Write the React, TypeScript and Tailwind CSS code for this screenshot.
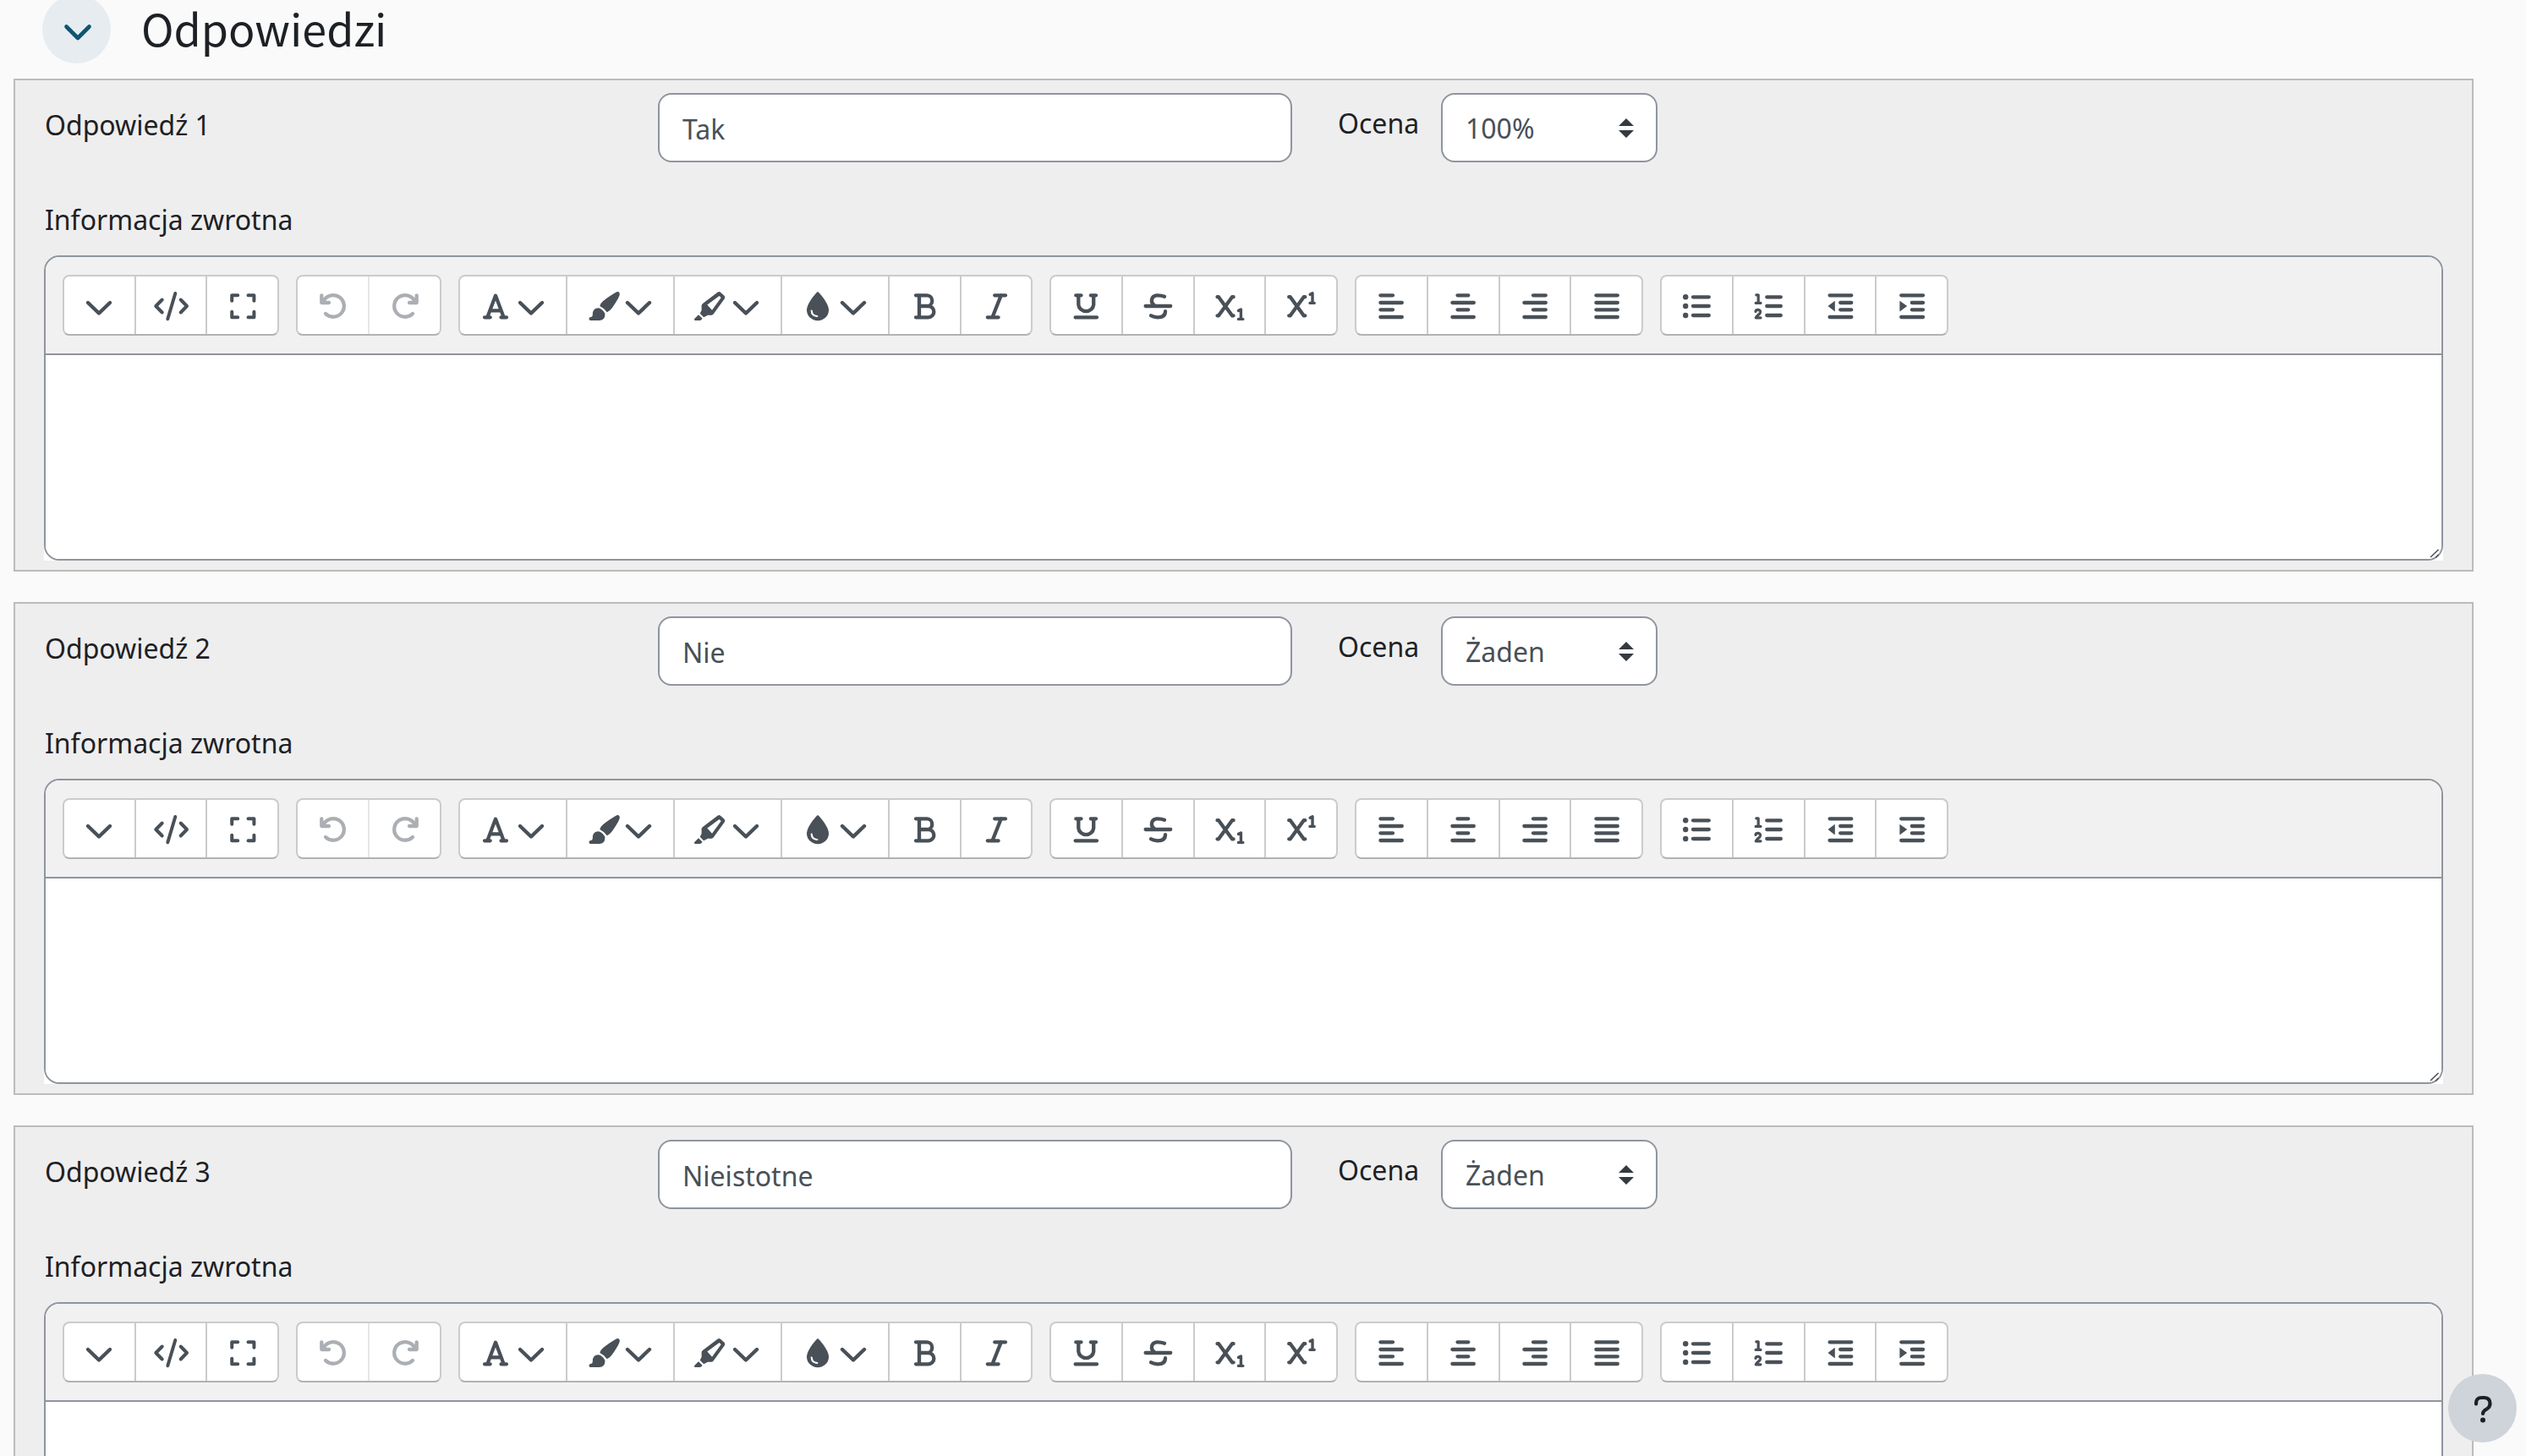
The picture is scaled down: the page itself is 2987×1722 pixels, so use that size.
import { useState } from 'react'
import type { ReactNode } from 'react'

const LINE = {
  fill: 'none',
  stroke: 'currentColor',
  strokeWidth: 4.3,
  strokeLinecap: 'round' as const,
  strokeLinejoin: 'round' as const,
}

function Icon({ children }: { children: ReactNode }) {
  return (
    <svg viewBox="0 0 42 42" className="h-[42px] w-[42px] shrink-0 overflow-visible" aria-hidden="true">
      {children}
    </svg>
  )
}

function Stroke({ d, width = 4.3 }: { d: string; width?: number }) {
  return (
    <Icon>
      <path d={d} {...LINE} strokeWidth={width} />
    </Icon>
  )
}

const chevron = <Stroke d="M8 18L21 30.5L34 18" width={4.4} />

type Tool = { name: string; icon: ReactNode; menu?: boolean; disabled?: boolean }

const toolGroups: { width: string; tools: Tool[] }[] = [
  {
    width: 'w-[256px]',
    tools: [
      { name: 'Pokaż więcej', icon: chevron },
      { name: 'Kod źródłowy', icon: <Stroke d="M10.7 14.5L3.3 22L10.7 29.5M26.3 7L17.3 37.3M32.7 14.5L40 22L32.7 29.5" width={4} /> },
      {
        name: 'Pełny ekran',
        icon: <Stroke d="M8.2 15.7V9.2H15.2M27.5 9.2H34.4V15.7M34.4 28.8V35.3H27.5M15.2 35.3H8.2V28.8" width={4} />,
      },
    ],
  },
  {
    width: 'w-[172px]',
    tools: [
      {
        name: 'Cofnij',
        disabled: true,
        icon: <Stroke d="M7.3 9.3V18H16M9.3 16.8A12.8 12.8 0 1 1 12 31" />,
      },
      {
        name: 'Ponów',
        disabled: true,
        icon: <Stroke d="M34.7 9.3V18H26M32.7 16.8A12.8 12.8 0 1 0 30 31" />,
      },
    ],
  },
  {
    width: 'w-[679px]',
    tools: [
      {
        name: 'Czcionka',
        menu: true,
        icon: <Stroke d="M8 35.3H14.7M27.5 35.3H34M11.8 34L21 9.6L30.2 34M15.5 27.3H26.5" width={4.2} />,
      },
      {
        name: 'Styl',
        menu: true,
        icon: (
          <Icon>
            <path
              fill="currentColor"
              d="M36.3 5.8C38.8 3.8 41.8 6 40.5 9.5C39 13.5 35 20 31.5 24.5Q29.5 27.5 25.8 29.3Q22.5 24.5 17.3 22Q18 18.5 21 16.2C26 12.2 31.5 8.5 36.3 5.8ZM16 24.2Q21 26 23.5 31Q23.5 39 16.5 39H6.3C4 39 4 35.2 6.3 35Q8.8 34.8 8.8 32Q8.7 24 16 24.2Z"
            />
          </Icon>
        ),
      },
      {
        name: 'Kolor tła',
        menu: true,
        icon: (
          <Icon>
            <path
              fill="currentColor"
              fillRule="evenodd"
              d="M29.8 5.5Q31.5 4.5 33 5.8L37.5 9.8Q39 11.3 37.8 13.3L24.8 31.3Q24 32.7 22.5 32.7H18L13.2 35.2L8.7 30.8L10.6 27V21.5Q10.6 20 12 19ZM31.5 10L17.3 20.6L23 26.8L33.7 12ZM7 32.3L11.6 36.7L10.3 38.2Q9.6 39 8.5 39H3.2Q1.2 38.6 2.2 36.9Z"
            />
          </Icon>
        ),
      },
      {
        name: 'Kolor tekstu',
        menu: true,
        icon: (
          <Icon>
            <path fill="currentColor" d="M21 5C22.5 5.6 34 18.5 34 26.8A13 12.4 0 0 1 8 26.8C8 18.5 19.5 5.6 21 5Z" />
            <path fill="none" stroke="white" strokeWidth={2.2} strokeLinecap="round" d="M13.7 27.5Q14 33.5 20.3 34" />
          </Icon>
        ),
      },
      {
        name: 'Pogrubienie',
        icon: <Stroke d="M11 9.3H24.2A6 6.3 0 0 1 24.2 22H16M24.2 22H25.8A6.5 6.6 0 0 1 25.8 35.3H11M15 9.3V35.3" />,
      },
      { name: 'Kursywa', icon: <Stroke d="M19.2 9.3H32M10.8 35.3H23.6M26.8 9.3L16.5 35.3" /> },
    ],
  },
  {
    width: 'w-[341px]',
    tools: [
      {
        name: 'Podkreślenie',
        icon: <Stroke d="M9.3 9.3H15.5M26.8 9.3H33M12.3 9.3V20.5A9 8.6 0 0 0 30.2 20.5V9.3M8.6 35.3H34" />,
      },
      {
        name: 'Przekreślenie',
        icon: (
          <Stroke d="M6.6 22H36.2M29 10.8Q24.5 9 19.5 9.4C13.5 10 11.5 17.5 17.5 21.5M30 28.2C30 33.5 25.5 35.3 20.5 35.3Q15.5 35 13 33.3" />
        ),
      },
      {
        name: 'Indeks dolny',
        icon: (
          <Icon>
            <path {...LINE} d="M6.5 11.2H8L24 33.3H25.6M25.6 11.2H24L8 33.3H6.5" />
            <path {...LINE} strokeWidth={3.4} d="M31.5 27.4L34.4 26V37.2M31.4 37.4H36.8" />
          </Icon>
        ),
      },
      {
        name: 'Indeks górny',
        icon: (
          <Icon>
            <path {...LINE} d="M6.2 11.2H7.7L23.7 33.3H25.3M25.3 11.2H23.7L7.7 33.3H6.2" />
            <path {...LINE} strokeWidth={3.4} d="M31.1 8.2L34 6.8V18M31 18.4H36.2" />
          </Icon>
        ),
      },
    ],
  },
  {
    width: 'w-[341px]',
    tools: [
      { name: 'Wyrównaj do lewej', icon: <Stroke d="M8.4 9.3H23M8.4 18H33.8M8.4 26.3H23M8.4 35H33.8" /> },
      { name: 'Wyśrodkuj', icon: <Stroke d="M14.5 9.3H27.3M8.4 18H33.8M14.5 26.3H27.3M8.4 35H33.8" /> },
      { name: 'Wyrównaj do prawej', icon: <Stroke d="M19 9.3H33.8M8.4 18H33.8M19 26.3H33.8M8.4 35H33.8" /> },
      { name: 'Wyjustuj', icon: <Stroke d="M8.4 9.3H33.8M8.4 18H33.8M8.4 26.3H33.8M8.4 35H33.8" /> },
    ],
  },
  {
    width: 'w-[341px]',
    tools: [
      {
        name: 'Lista wypunktowana',
        icon: (
          <Icon>
            <g fill="currentColor">
              <circle cx="8.2" cy="11.3" r="3.2" />
              <circle cx="8.2" cy="22" r="3.2" />
              <circle cx="8.2" cy="33" r="3.2" />
            </g>
            <path {...LINE} d="M17 11.3H35.8M17 22H35.8M17 33H35.8" />
          </Icon>
        ),
      },
      {
        name: 'Lista numerowana',
        icon: (
          <Icon>
            <path {...LINE} d="M19.3 11.3H35.8M19.3 22H35.8M19.3 33H35.8" />
            <path {...LINE} strokeWidth={3.2} d="M6.8 8.8H9.2V18.2M6.2 18.4H12M6 28.5C6.5 25.5 12 25.8 11.6 29.2C11.2 32 7.5 32.8 6.3 35.8H12" />
          </Icon>
        ),
      },
      {
        name: 'Zmniejsz wcięcie',
        icon: (
          <Icon>
            <path fill="currentColor" d="M6.5 22L14.8 15.7V28.6Z" />
            <path {...LINE} d="M8.6 9.3H34.3M21.2 18H34.3M21.2 26.3H34.3M8.6 35H34.3" />
          </Icon>
        ),
      },
      {
        name: 'Zwiększ wcięcie',
        icon: (
          <Icon>
            <path fill="currentColor" d="M15.2 22L6.4 15.7V28.6Z" />
            <path {...LINE} d="M8.2 9.3H34M20.8 18H34M20.8 26.3H34M8.2 35H34" />
          </Icon>
        ),
      },
    ],
  },
]

function Toolbar() {
  return (
    <div role="toolbar" className="flex flex-wrap gap-5 rounded-t-2xl border-b-2 border-[#8f959e] bg-[#f1f1f1] px-5 py-[21px]">
      {toolGroups.map((group, i) => (
        <div
          key={i}
          className={`flex h-[72px] overflow-hidden rounded-lg border-2 border-[#cbcbcb] border-b-[#b2b2b2] bg-white ${group.width}`}
        >
          {group.tools.map((tool) => (
            <button
              key={tool.name}
              type="button"
              aria-label={tool.name}
              disabled={tool.disabled}
              className={`flex items-center justify-center border-r-2 border-[#cbcbcb] text-[#495057] last:border-r-0 disabled:border-[#e6e6e6] disabled:text-[#abafb3] ${
                tool.menu ? 'w-[127px] shrink-0' : 'flex-1'
              }`}
            >
              {tool.icon}
              {tool.menu && chevron}
            </button>
          ))}
        </div>
      ))}
    </div>
  )
}

function FeedbackEditor({ id }: { id: string }) {
  return (
    <div className="relative rounded-t-[18px] bg-white">
      <div className="rounded-[18px] border-2 border-[#8f959e]">
        <Toolbar />
        <textarea id={id} className="block h-[241px] w-full resize-none rounded-b-2xl bg-white px-5 py-4 outline-none" />
      </div>
      <svg viewBox="0 0 14 14" className="absolute right-0.5 bottom-0.5 h-[14px] w-[14px]" aria-hidden="true">
        <path d="M1 12L10.5 3M7 12.5L10.5 9" fill="none" stroke="#4c4d52" strokeWidth="1.5" />
      </svg>
    </div>
  )
}

function AnswerPanel({ index, answer, grade }: { index: number; answer: string; grade: string }) {
  const [text, setText] = useState(answer)
  const [value, setValue] = useState(grade)

  return (
    <div className="border-2 border-[#bbbbbb] bg-[#eeeeee] px-[34px] pt-[15px] pb-[11px]">
      <div className="flex items-start">
        <label htmlFor={`answer-${index}`} className="w-[726px] shrink-0 pt-3.5 pl-px">
          Odpowiedź {index}
        </label>
        <input
          id={`answer-${index}`}
          type="text"
          value={text}
          onChange={(e) => setText(e.target.value)}
          className="h-[82px] w-[750px] rounded-2xl border-2 border-[#8f959e] bg-white px-[27px] pt-0.5 text-[#495057]"
        />
        <label htmlFor={`grade-${index}`} className="w-[176px] shrink-0 pt-3 pl-[54px]">
          Ocena
        </label>
        <div className="relative">
          <select
            id={`grade-${index}`}
            value={value}
            onChange={(e) => setValue(e.target.value)}
            className="h-[82px] w-[256px] appearance-none rounded-2xl border-2 border-[#8f959e] bg-white pt-0.5 pr-14 pl-[27px] text-[#495057]"
          >
            <option>Żaden</option>
            <option>100%</option>
            <option>50%</option>
          </select>
          <svg viewBox="0 0 18 24" className="pointer-events-none absolute top-[29px] right-7 h-6 w-[18px]" aria-hidden="true">
            <path fill="#343a40" d="M0 10L9 1L18 10ZM0 15H18L9 24Z" />
          </svg>
        </div>
      </div>
      <label htmlFor={`feedback-${index}`} className="mt-11 mb-[18px] block pl-px">
        Informacja zwrotna
      </label>
      <FeedbackEditor id={`feedback-${index}`} />
    </div>
  )
}

const answers = [
  { answer: 'Tak', grade: '100%' },
  { answer: 'Nie', grade: 'Żaden' },
  { answer: 'Nieistotne', grade: 'Żaden' },
]

export default function App() {
  const [open, setOpen] = useState(true)

  return (
    <main className="h-screen overflow-hidden bg-[#fafafa] font-['Noto_Sans',sans-serif] text-[32px] leading-[48px] text-[#1d2125]">
      <div className="-mt-1.5 mb-[18px] flex items-center gap-9 pl-[50px]">
        <button
          type="button"
          aria-label="Odpowiedzi"
          aria-expanded={open}
          onClick={() => setOpen(!open)}
          className="flex h-[81px] w-[81px] items-center justify-center rounded-full bg-[#e6ecf0] text-[#0f5472]"
        >
          <Stroke d="M8.5 17.5L22 31L35.5 17.5" width={4.6} />
        </button>
        <h3 className="pb-1 font-['Noto_Sans_CJK_SC',sans-serif] text-[52px] leading-[64px]">Odpowiedzi</h3>
      </div>

      {open && (
        <div className="mr-[62px] ml-4 flex flex-col gap-9">
          {answers.map((item, i) => (
            <AnswerPanel key={i} index={i + 1} answer={item.answer} grade={item.grade} />
          ))}
        </div>
      )}

      <button
        type="button"
        aria-label="Pomoc"
        className="fixed right-[11px] bottom-4 flex h-[81px] w-[81px] items-center justify-center rounded-full bg-[#ced4da] text-[#1d2125]"
      >
        <svg viewBox="0 0 24 34" className="h-[34px] w-6" aria-hidden="true">
          <path
            d="M4 11.5V10.5Q4 4 10.5 4H14Q20.5 4.5 20.5 11Q20.5 15 16.5 17.5Q12 20 12 23"
            fill="none"
            stroke="currentColor"
            strokeWidth="4.2"
            strokeLinecap="round"
          />
          <circle cx="12" cy="30.5" r="3" fill="currentColor" />
        </svg>
      </button>
    </main>
  )
}
